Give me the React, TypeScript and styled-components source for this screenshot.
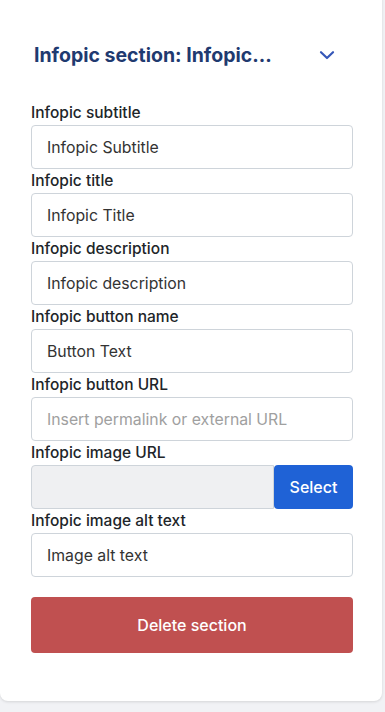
import React from 'react';
import styled, { createGlobalStyle } from 'styled-components';

const GlobalStyle = createGlobalStyle`
  html, body {
    margin: 0;
    padding: 0;
    background: #f1f2f5;
    font-family: Inter, "Noto Sans", "Liberation Sans", sans-serif;
  }
  * { box-sizing: border-box; }
`;

interface Field {
  label: string;
  value?: string;
  placeholder?: string;
}

const fields: Field[] = [
  { label: 'Infopic subtitle', value: 'Infopic Subtitle' },
  { label: 'Infopic title', value: 'Infopic Title' },
  { label: 'Infopic description', value: 'Infopic description' },
  { label: 'Infopic button name', value: 'Button Text' },
  { label: 'Infopic button URL', placeholder: 'Insert permalink or external URL' },
];

const Chevron = () => (
  <svg width="16" height="16" viewBox="0 0 16 16" fill="none">
    <path d="M2 5.2l6 5.8 6-5.8" stroke="#3557b8" strokeWidth="2.2" strokeLinecap="round" strokeLinejoin="round" />
  </svg>
);

const App = () => {
  return (
    <Page>
      <GlobalStyle />
      <Card>
        <Header>
          <Title>Infopic section: Infopic...</Title>
          <Toggle>
            <Chevron />
          </Toggle>
        </Header>
        <Form>
          {fields.map((f) => (
            <Group key={f.label}>
              <Label>{f.label}</Label>
              <Input defaultValue={f.value} placeholder={f.placeholder} />
            </Group>
          ))}
          <Group>
            <Label>Infopic image URL</Label>
            <InputRow>
              <Input $muted readOnly />
              <SelectButton>Select</SelectButton>
            </InputRow>
          </Group>
          <Group>
            <Label>Infopic image alt text</Label>
            <Input defaultValue="Image alt text" />
          </Group>
        </Form>
        <DeleteButton>Delete section</DeleteButton>
      </Card>
    </Page>
  );
};

export default App;

const Page = styled.div`
  padding: 0 3px 11px 0;
  min-height: 712px;
`;

const Card = styled.div`
  margin-top: -8px;
  background: #ffffff;
  border-radius: 8px;
  box-shadow: 0 1px 3px rgba(0, 0, 0, 0.12);
  padding: 43px 29px 48px 31px;
`;

const Header = styled.div`
  display: flex;
  align-items: center;
  justify-content: space-between;
  height: 40px;
  padding: 0 18px 0 3px;
  margin-bottom: 26px;
`;

const Title = styled.div`
  font-size: 19.5px;
  font-weight: 700;
  color: #1f3a70;
  white-space: nowrap;
`;

const Toggle = styled.div`
  display: flex;
  align-items: center;
`;

const Form = styled.div`
  display: flex;
  flex-direction: column;
`;

const Group = styled.div`
  display: flex;
  flex-direction: column;
`;

const Label = styled.label`
  font-size: 15.5px;
  font-weight: 500;
  color: #212529;
  line-height: 24px;
`;

const Input = styled.input<{ $muted?: boolean }>`
  width: 100%;
  height: 44px;
  border: 1px solid #ced4da;
  border-radius: 4px;
  padding: 0 15px;
  font-family: inherit;
  font-size: 15.8px;
  color: #333333;
  background: ${(p) => (p.$muted ? '#eff0f2' : '#ffffff')};
  outline: none;
  &::placeholder {
    color: #a0a0a0;
  }
`;

const InputRow = styled.div`
  display: flex;
  ${Input} {
    flex: 1;
    border-top-right-radius: 0;
    border-bottom-right-radius: 0;
  }
`;

const SelectButton = styled.button`
  width: 79px;
  height: 44px;
  border: none;
  border-radius: 4px;
  background: #1f62d6;
  color: #ffffff;
  font-family: inherit;
  font-size: 16px;
  font-weight: 500;
  flex-shrink: 0;
`;

const DeleteButton = styled.button`
  width: 100%;
  height: 56px;
  margin-top: 20px;
  border: none;
  border-radius: 4px;
  background: #c05050;
  color: #ffffff;
  font-family: inherit;
  font-size: 16px;
  font-weight: 500;
`;
